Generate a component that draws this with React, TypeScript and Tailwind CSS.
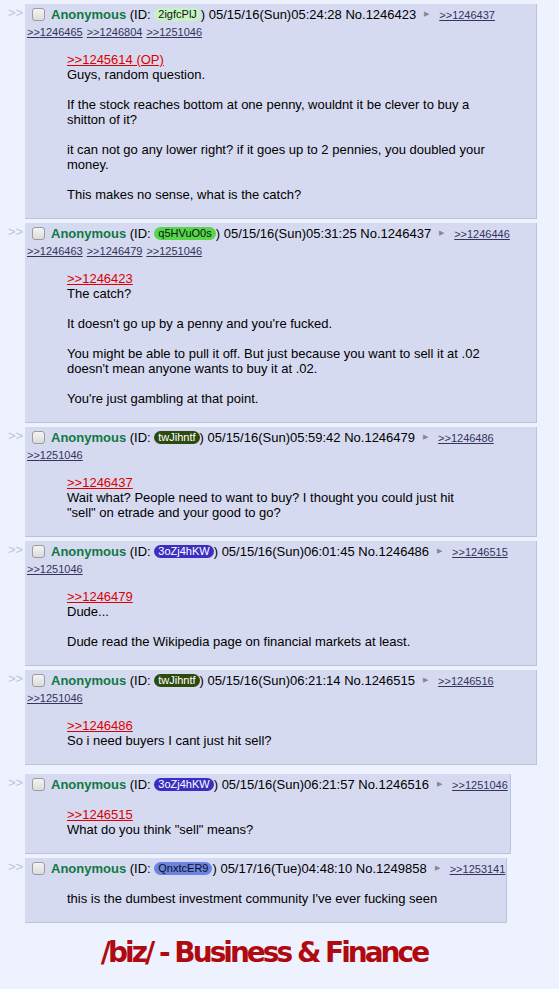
import React from "react";

type Post = {
  uid: string;
  uidClass: string;
  date: string;
  no: string;
  backlinks: string[];
  moreLinks: string[];
  quote?: string;
  lines: string[];
  width: string;
  gap: string;
};

const posts: Post[] = [
  {
    uid: "2igfcPlJ",
    uidClass: "bg-[#c4f4c0] text-[#111]",
    date: "05/15/16(Sun)05:24:28",
    no: "1246423",
    backlinks: ["1246437"],
    moreLinks: ["1246465", "1246804", "1251046"],
    quote: ">>1245614 (OP)",
    lines: [
      "Guys, random question.",
      "",
      "If the stock reaches bottom at one penny, wouldnt it be clever to buy a",
      "shitton of it?",
      "",
      "it can not go any lower right? if it goes up to 2 pennies, you doubled your",
      "money.",
      "",
      "This makes no sense, what is the catch?",
    ],
    width: "w-[512px]",
    gap: "mt-0",
  },
  {
    uid: "q5HVuO0s",
    uidClass: "bg-[#55d64b] text-[#111]",
    date: "05/15/16(Sun)05:31:25",
    no: "1246437",
    backlinks: ["1246446"],
    moreLinks: ["1246463", "1246479", "1251046"],
    quote: ">>1246423",
    lines: [
      "The catch?",
      "",
      "It doesn't go up by a penny and you're fucked.",
      "",
      "You might be able to pull it off. But just because you want to sell it at .02",
      "doesn't mean anyone wants to buy it at .02.",
      "",
      "You're just gambling at that point.",
    ],
    width: "w-[512px]",
    gap: "mt-[4px]",
  },
  {
    uid: "twJihntf",
    uidClass: "bg-[#2d4a0e] text-white",
    date: "05/15/16(Sun)05:59:42",
    no: "1246479",
    backlinks: ["1246486"],
    moreLinks: ["1251046"],
    quote: ">>1246437",
    lines: [
      "Wait what? People need to want to buy? I thought you could just hit",
      "\"sell\" on etrade and your good to go?",
    ],
    width: "w-[512px]",
    gap: "mt-[4px]",
  },
  {
    uid: "3oZj4hKW",
    uidClass: "bg-[#3b2fc2] text-white",
    date: "05/15/16(Sun)06:01:45",
    no: "1246486",
    backlinks: ["1246515"],
    moreLinks: ["1251046"],
    quote: ">>1246479",
    lines: ["Dude...", "", "Dude read the Wikipedia page on financial markets at least."],
    width: "w-[512px]",
    gap: "mt-[4px]",
  },
  {
    uid: "twJihntf",
    uidClass: "bg-[#2d4a0e] text-white",
    date: "05/15/16(Sun)06:21:14",
    no: "1246515",
    backlinks: ["1246516"],
    moreLinks: ["1251046"],
    quote: ">>1246486",
    lines: ["So i need buyers I cant just hit sell?"],
    width: "w-[512px]",
    gap: "mt-[4px]",
  },
  {
    uid: "3oZj4hKW",
    uidClass: "bg-[#3b2fc2] text-white",
    date: "05/15/16(Sun)06:21:57",
    no: "1246516",
    backlinks: ["1251046"],
    moreLinks: [],
    quote: ">>1246515",
    lines: ["What do you think \"sell\" means?"],
    width: "w-[486px]",
    gap: "mt-[9px]",
  },
  {
    uid: "QnxtcER9",
    uidClass: "bg-[#6a83e4] text-[#111]",
    date: "05/17/16(Tue)04:48:10",
    no: "1249858",
    backlinks: ["1253141"],
    moreLinks: [],
    lines: ["this is the dumbest investment community I've ever fucking seen"],
    width: "w-[482px]",
    gap: "mt-[4px]",
  },
];

function Checkbox() {
  return (
    <span className="inline-block w-[13px] h-[13px] align-middle rounded-[3px] border border-[#9c9c9c] bg-gradient-to-b from-[#f4f4f4] to-[#dcdcdc] ml-[5px] mr-[6px] -mt-[2px]" />
  );
}

function Backlink({ no }: { no: string }) {
  return (
    <a className="text-[11px] text-[#34345c] underline mr-[4px] cursor-pointer">
      &gt;&gt;{no}
    </a>
  );
}

function Reply({ post }: { post: Post }) {
  return (
    <div className={`flex items-start ${post.gap}`}>
      <div className="w-[25px] shrink-0 pl-[8px] pt-[1px] text-[13px] leading-[15px] text-[#b7c5d9]">
        &gt;&gt;
      </div>
      <div
        className={`${post.width} bg-[#d6daf0] border-r border-b border-[#b7c5d9] pt-[2px] pl-[2px]`}
      >
        <div className="h-[18px] leading-[18px] whitespace-nowrap">
          <Checkbox />
          <span className="font-bold text-[#117743]">Anonymous</span>{" "}
          <span>(ID: </span>
          <span
            className={`inline-block align-middle -mt-[2px] rounded-[8px] px-[4px] text-[11px] leading-[13px] ${post.uidClass}`}
          >
            {post.uid}
          </span>
          <span>
            ) {post.date} No.{post.no}
          </span>
          <span className="inline-block align-middle -mt-[3px] text-[7px] text-[#888] ml-[8px] mr-[10px]">
            ▶
          </span>
          {post.backlinks.map((b) => (
            <Backlink key={b} no={b} />
          ))}
        </div>
        {post.moreLinks.length > 0 && (
          <div className="h-[15px] leading-[15px] whitespace-nowrap">
            {post.moreLinks.map((b) => (
              <Backlink key={b} no={b} />
            ))}
          </div>
        )}
        <div className="ml-[40px] mt-[13px] mb-[16px] leading-[15px] text-[#000]">
          {post.quote && (
            <div className="h-[15px]">
              <a className="text-[#dd0000] underline cursor-pointer">{post.quote}</a>
            </div>
          )}
          {post.lines.map((l, i) => (
            <div key={i} className="h-[15px] whitespace-nowrap">
              {l}
            </div>
          ))}
        </div>
      </div>
    </div>
  );
}

export default function App() {
  return (
    <div className="min-h-[989px] bg-[#eef2ff] pt-[4px] text-[13px] text-black font-['Liberation_Sans',Arial,sans-serif]">
      {posts.map((p) => (
        <Reply key={p.no} post={p} />
      ))}
      <div className="w-[528px] mt-[13px] flex justify-center">
        <h1 className="font-['DejaVu_Sans',Tahoma,sans-serif] font-bold text-[28px] leading-[34px] tracking-[-3px] text-[#af0a0f]">
          /biz/ - Business &amp; Finance
        </h1>
      </div>
    </div>
  );
}
